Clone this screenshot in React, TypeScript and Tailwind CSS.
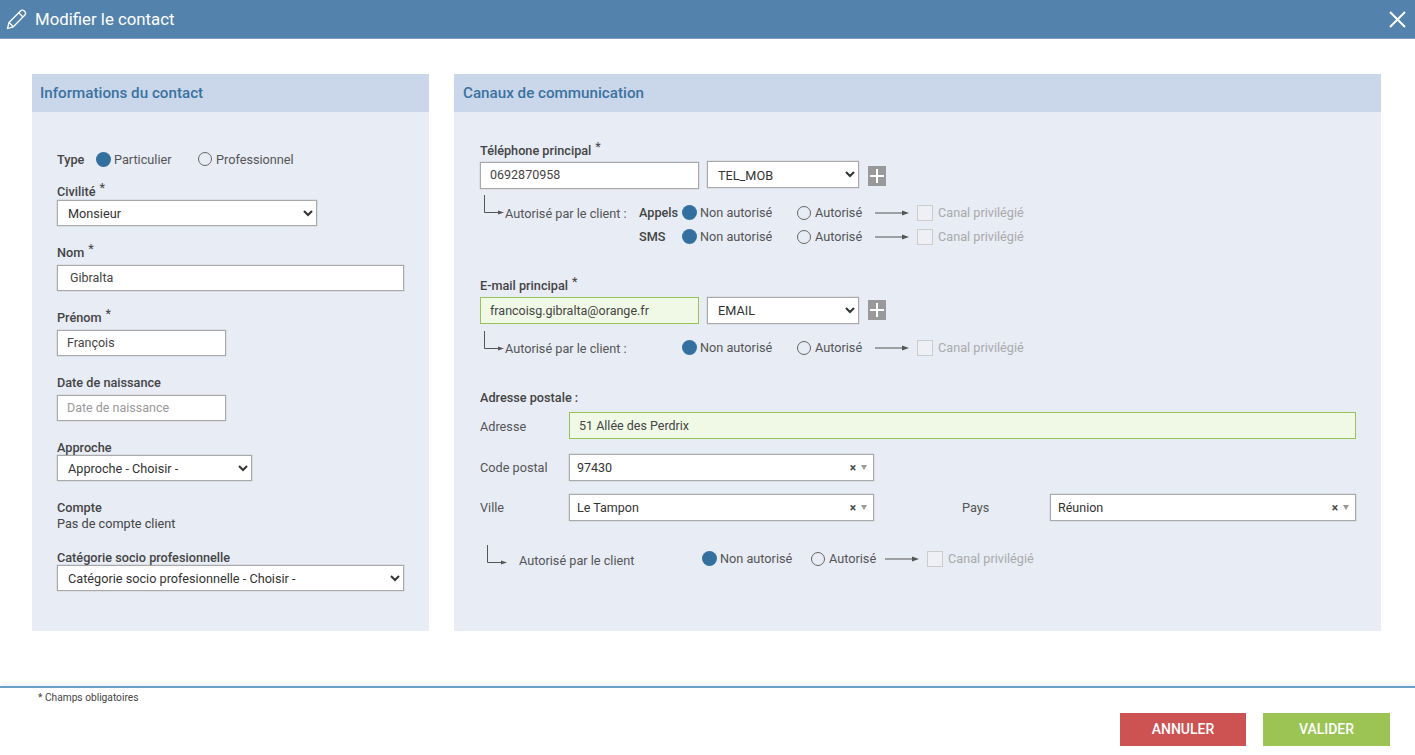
import React from "react";

const Radio = ({ on }: { on?: boolean }) =>
  on ? (
    <span className="block h-[15px] w-[15px] shrink-0 rounded-full bg-[#33709f]" />
  ) : (
    <span className="block h-[14px] w-[14px] shrink-0 rounded-full border border-[#666]" />
  );

const Star = () => <span className="relative top-[-4px] ml-[4px] font-normal">*</span>;

const Label = ({ children, className = "" }: { children: React.ReactNode; className?: string }) => (
  <div className={`h-[16px] leading-[18px] font-medium text-[#444] ${className}`}>{children}</div>
);

const inputClass =
  "block h-[26px] border border-[#a9a9a9] bg-white pb-[2px] text-[12.5px] text-[#444] outline-none shadow-[0_0_1px_#999] placeholder:text-[#999]";
const greenClass =
  "block h-[27px] border border-[#9ac25a] bg-[#f0f9e6] text-[12.5px] text-[#444] outline-none";
const selectClass =
  "block h-[26px] border border-[#a9a9a9] bg-white pl-[6px] text-[12.7px] text-[#333] outline-none shadow-[0_0_1px_#999]";

const Corner = () => (
  <svg width="21" height="22" viewBox="0 0 21 22" className="shrink-0">
    <path d="M0.5 0V17.5H15" fill="none" stroke="#555" strokeWidth="1" />
    <path d="M14 15.5L20 17.5L14 19.5Z" fill="#555" />
  </svg>
);

const Arrow = () => (
  <svg width="34" height="8" viewBox="0 0 34 8" className="shrink-0">
    <path d="M0 4H28" stroke="#555" strokeWidth="1" />
    <path d="M27 1.5L34 4L27 6.5Z" fill="#555" />
  </svg>
);

const Check = () => <span className="ml-[8px] block h-[16px] w-[16px] shrink-0 border border-[#ccc] bg-[#eef0f5]" />;

const Consent = ({ gapA = 115, gapB = 78 }: { gapA?: number; gapB?: number }) => (
  <>
    <div className="flex items-center" style={{ width: gapA }}>
      <Radio on />
      <span className="ml-[3px]">Non autorisé</span>
    </div>
    <div className="flex items-center" style={{ width: gapB }}>
      <Radio />
      <span className="ml-[4px]">Autorisé</span>
    </div>
    <Arrow />
    <Check />
    <span className="ml-[5px] text-[#aaa]">Canal privilégié</span>
  </>
);

const Plus = () => (
  <span className="flex h-[20px] w-[18px] shrink-0 items-center justify-center bg-[#999]">
    <svg width="14" height="14" viewBox="0 0 14 14">
      <path d="M7 0V14M0 7H14" stroke="#fff" strokeWidth="2" />
    </svg>
  </span>
);

const Combo = ({ value, className = "" }: { value: string; className?: string }) => (
  <div
    className={`flex h-[27px] items-center border border-[#a9a9a9] bg-white pl-[7px] pr-[6px] text-[12.5px] text-[#333] shadow-[0_0_1px_#999] ${className}`}
  >
    <span className="flex-1 pt-[2px]">{value}</span>
    <span className="mr-[5px] text-[12px] font-bold leading-none text-[#444]">×</span>
    <span className="h-0 w-0 border-x-[3.5px] border-t-[5px] border-x-transparent border-t-[#999]" />
  </div>
);

const PanelTitle = ({ children, pad }: { children: React.ReactNode; pad: string }) => (
  <div className={`flex h-[38px] items-center bg-[#cad7ea] pt-[1px] text-[15.2px] font-medium text-[#3b72a0] ${pad}`}>
    {children}
  </div>
);

export default function App() {
  return (
    <div
      className="flex h-[755px] w-full flex-col overflow-hidden bg-white text-[12.7px] text-[#555]"
      style={{ fontFamily: "Roboto, sans-serif" }}
    >
      <header className="flex h-[39px] shrink-0 items-center justify-between border-b border-[#7f9fbe] bg-[#5383ad] pl-[6px] pr-[9px] text-white">
        <div className="flex items-center">
          <svg width="21" height="21" viewBox="0 0 21 21" fill="none" stroke="#fff" strokeWidth="1.3" strokeLinejoin="round">
            <path d="M1.5 19.5L3 13.5L14.5 2C15.6 0.9 17.2 0.9 18.5 2.2C19.8 3.5 19.8 5.1 18.7 6.2L7.3 17.8Z" />
            <path d="M3 13.5L7.3 17.8M12.7 3.8L17 8" />
          </svg>
          <span className="ml-[8px] text-[16.8px] leading-none">Modifier le contact</span>
        </div>
        <svg width="17" height="17" viewBox="0 0 17 17" stroke="#fff" strokeWidth="2">
          <path d="M1 1L16 16M16 1L1 16" />
        </svg>
      </header>

      <main className="flex flex-1 items-start gap-[25px] pl-[32px] pt-[35px]">
        <section className="h-[557px] w-[397px] shrink-0 bg-[#e7ecf5]">
          <PanelTitle pad="pl-[8px]">Informations du contact</PanelTitle>
          <div className="pl-[25px] pr-[25px] pt-[37px]">
            <div className="flex h-[20px] items-center">
              <span className="w-[39px] pt-[1px] font-medium text-[#444]">Type</span>
              <Radio on />
              <span className="ml-[3px] w-[27px] whitespace-nowrap pt-[1px]">Particulier</span>
              <span className="ml-[57px]"><Radio /></span>
              <span className="ml-[4px] pt-[1px]">Professionnel</span>
            </div>
            <Label className="mt-[14px]">Civilité<Star /></Label>
            <select className={`${selectClass} mt-[1px] w-[260px]`} defaultValue="Monsieur">
              <option>Monsieur</option>
            </select>
            <Label className="mt-[18px]">Nom<Star /></Label>
            <input className={`${inputClass} mt-[5px] w-full pl-[12px]`} defaultValue="Gibralta" readOnly />
            <Label className="mt-[18px]">Prénom<Star /></Label>
            <input className={`${inputClass} mt-[5px] w-[169px] pl-[9px]`} defaultValue="François" readOnly />
            <Label className="mt-[18px]">Date de naissance</Label>
            <input className={`${inputClass} mt-[5px] w-[169px] pl-[9px]`} placeholder="Date de naissance" readOnly />
            <Label className="mt-[18px]">Approche</Label>
            <select className={`${selectClass} w-[195px]`} defaultValue="a">
              <option value="a">Approche - Choisir -</option>
            </select>
            <Label className="mt-[18px]">Compte</Label>
            <div className="h-[16px] leading-[18px] text-[#444]">Pas de compte client</div>
            <Label className="mt-[18px]">Catégorie socio profesionnelle</Label>
            <select className={`${selectClass} w-full`} defaultValue="a">
              <option value="a">Catégorie socio profesionnelle - Choisir -</option>
            </select>
          </div>
        </section>

        <section className="h-[557px] w-[927px] shrink-0 bg-[#e7ecf5]">
          <PanelTitle pad="pl-[9px]">Canaux de communication</PanelTitle>
          <div className="pl-[26px] pr-[25px] pt-[30px]">
            <Label>Téléphone principal<Star /></Label>
            <div className="mt-[3px] flex items-start">
              <input className={`${inputClass} mt-[1px] h-[27px] w-[219px] pl-[9px]`} defaultValue="0692870958" readOnly />
              <select className={`${selectClass} ml-[8px] h-[27px] w-[152px] pt-[2px]`} defaultValue="a">
                <option value="a">TEL_MOB</option>
              </select>
              <span className="ml-[9px] mt-[5px]"><Plus /></span>
            </div>
            <div className="mt-[6px] flex items-start">
              <div className="flex w-[159px] items-start pl-[4px]">
                <Corner />
                <span className="mt-[11px] whitespace-nowrap leading-[16px]">Autorisé par le client :</span>
              </div>
              <div className="pt-[6px]">
                <div className="flex h-[24px] items-center">
                  <span className="w-[43px] font-medium text-[#444]">Appels</span>
                  <Consent />
                </div>
                <div className="flex h-[24px] items-center">
                  <span className="w-[43px] font-medium text-[#444]">SMS</span>
                  <Consent />
                </div>
              </div>
            </div>

            <Label className="mt-[28px]">E-mail principal<Star /></Label>
            <div className="mt-[4px] flex items-start">
              <input className={`${greenClass} w-[219px] pl-[9px]`} defaultValue="francoisg.gibralta@orange.fr" readOnly />
              <select className={`${selectClass} ml-[8px] h-[27px] w-[152px]`} defaultValue="a">
                <option value="a">EMAIL</option>
              </select>
              <span className="ml-[9px] mt-[3px]"><Plus /></span>
            </div>
            <div className="mt-[7px] flex items-start">
              <div className="flex w-[159px] items-start pl-[4px]">
                <Corner />
                <span className="mt-[10px] whitespace-nowrap leading-[16px]">Autorisé par le client :</span>
              </div>
              <div className="mt-[5px] flex h-[24px] items-center pl-[43px]">
                <Consent />
              </div>
            </div>

            <Label className="mt-[29px]">Adresse postale :</Label>
            <div className="mt-[7px] flex items-center">
              <span className="w-[89px] pt-[3px]">Adresse</span>
              <input className={`${greenClass} w-[787px] pl-[9px]`} defaultValue="51 Allée des Perdrix" readOnly />
            </div>
            <div className="mt-[15px] flex items-center">
              <span className="w-[89px]">Code postal</span>
              <Combo value="97430" className="w-[305px]" />
            </div>
            <div className="mt-[13px] flex items-center">
              <span className="w-[89px] pt-[1px]">Ville</span>
              <Combo value="Le Tampon" className="w-[305px]" />
              <span className="ml-[88px] w-[88px] pt-[1px]">Pays</span>
              <Combo value="Réunion" className="w-[306px]" />
            </div>
            <div className="mt-[24px] flex items-start">
              <div className="flex w-[222px] shrink-0 items-start pl-[7px]">
                <Corner />
                <span className="ml-[11px] mt-[8px] whitespace-nowrap leading-[16px]">Autorisé par le client</span>
              </div>
              <div className="mt-[2px] flex h-[24px] items-center">
                <Consent gapA={109} gapB={74} />
              </div>
            </div>
          </div>
        </section>
      </main>

      <footer className="relative flex h-[69px] shrink-0 items-start justify-between border-t-2 border-[#6a9fc8] pl-[38px] pr-[25px] shadow-[0_-2px_4px_rgba(0,0,0,0.06)]">
        <span className="mt-[3px] text-[10.2px] leading-[14px] text-[#444]">* Champs obligatoires</span>
        <div className="mt-[25px] flex gap-[17px]">
          <button className="h-[33px] w-[126px] bg-[#cd5252] text-[14px] font-medium text-white">ANNULER</button>
          <button className="h-[33px] w-[127px] bg-[#9bc455] text-[14px] font-medium text-white">VALIDER</button>
        </div>
      </footer>
    </div>
  );
}
